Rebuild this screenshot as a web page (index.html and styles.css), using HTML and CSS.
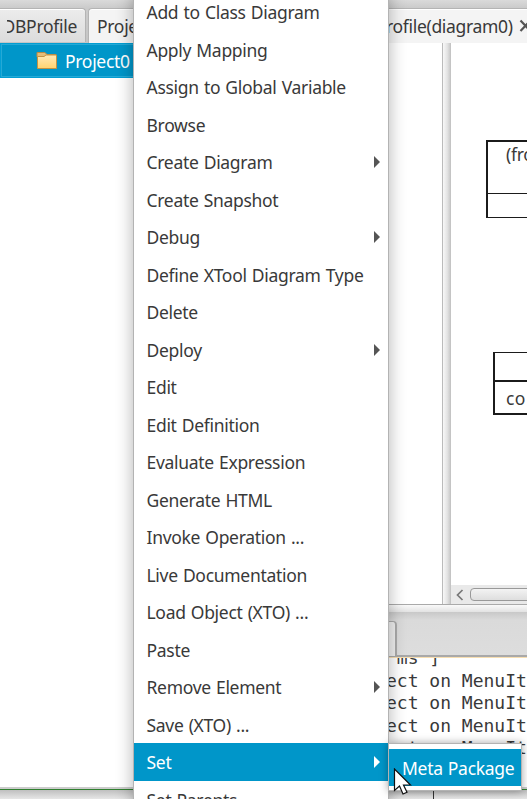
FILE: index.html
```html
<!DOCTYPE html>
<html lang="en">
<head>
<meta charset="utf-8">
<title>XModeler</title>
<link rel="stylesheet" href="styles.css">
</head>
<body>
<div class="app">
  <div class="tabs">
    <div class="tab tab-first"><div class="clip"><span>DBProfile</span></div></div>
    <div class="tab tab-active"><span class="tab-name">Project0</span><span class="tab-diagram">rofile(diagram0)</span>
      <svg class="close" width="14" height="14" viewBox="0 0 14 14"><path d="M1.500 1.500L11.500 12M11.500 1.500L1.500 12"/></svg>
    </div>
  </div>
  <div class="work">
    <div class="tree">
      <div class="tree-row">
        <svg width="22" height="19" viewBox="0 0 22 19"><defs><linearGradient id="f" x2="0" y2="1"><stop stop-color="#ffeab8"/><stop offset="1" stop-color="#ffd36f"/></linearGradient></defs><path d="M1 1.500H9L11 3.500H20V6H1Z" fill="#e5bd78" stroke="#b78b45"/><path d="M1.500 17.500V5.500H8L10 4H20.500V17.500Z" fill="url(#f)" stroke="#c39242"/></svg>
        <span>Project0</span>
      </div>
    </div>
    <div class="side">
      <div class="upper">
        <div class="divider"></div>
        <div class="canvas">
          <div class="sheet">
            <div class="cls cls-a"><div class="head">(from</div><div class="body"></div></div>
            <div class="cls cls-b"><div class="head"></div><div class="body">co</div></div>
          </div>
          <div class="scroll">
            <svg class="arrow" width="19" height="18" viewBox="0 0 19 18"><path d="M11.500 4L6.500 9L11.500 14"/></svg>
            <div class="thumb"></div>
          </div>
        </div>
      </div>
      <div class="hdivider"></div>
      <div class="ctabs"><div class="ctab"></div></div>
      <div class="console"><div>&nbsp;ms ]</div><div>ect on MenuIt</div><div>ect on MenuIt</div><div>ect on MenuIt</div><div>ect on MenuIt</div></div>
    </div>
  </div>
  <div class="footer"><div class="footer-edge"></div></div>
</div>

<div class="menu">
  <div class="item">Add to Class Diagram</div>
  <div class="item">Apply Mapping</div>
  <div class="item">Assign to Global Variable</div>
  <div class="item">Browse</div>
  <div class="item more">Create Diagram</div>
  <div class="item">Create Snapshot</div>
  <div class="item more">Debug</div>
  <div class="item">Define XTool Diagram Type</div>
  <div class="item">Delete</div>
  <div class="item more">Deploy</div>
  <div class="item">Edit</div>
  <div class="item">Edit Definition</div>
  <div class="item">Evaluate Expression</div>
  <div class="item">Generate HTML</div>
  <div class="item">Invoke Operation ...</div>
  <div class="item">Live Documentation</div>
  <div class="item">Load Object (XTO) ...</div>
  <div class="item">Paste</div>
  <div class="item more">Remove Element</div>
  <div class="item">Save (XTO) ...</div>
  <div class="item more selected">Set</div>
  <div class="item">Set Parents</div>
</div>
<div class="submenu"><div class="subitem">Meta Package</div></div>
<svg class="cursor" width="20" height="28" viewBox="0 0 20 28"><path d="M1.500 1V22.500L6.500 18L10 26L14 24.200L10.500 17H17.500Z" fill="#fff" stroke="#111" stroke-width="1.200"/></svg>
</body>
</html>
```

FILE: styles.css
```css
* { box-sizing: border-box; }
body {
  margin: 0;
  width: 527px;
  height: 799px;
  overflow: hidden;
  position: relative;
  background: #fff;
  color: #393939;
  font: 17.5px/24px "Noto Sans", "Open Sans", sans-serif;
  letter-spacing: -0.3px;
  word-spacing: 0.9px;
  white-space: nowrap;
}
.app { height: 799px; display: flex; flex-direction: column; overflow: hidden; }
.tabs {
  height: 43px;
  padding: 8px 0 0;
  display: flex;
  gap: 2px;
  background: linear-gradient(#dadada, #cbcbcb 8px, #c5c5c5);
}
.tab { height: 35px; border: 1px solid #b4b4b4; border-bottom: 0; box-shadow: inset 0 1px #fff; }
.tab-first {
  flex: none;
  width: 86px;
  height: 34px;
  padding: 5px 8px 0 7px;
  border-left: 0;
  border-radius: 0 4px 0 0;
  background: linear-gradient(#ececec, #dcdcdc);
}
.clip { display: flex; justify-content: flex-end; overflow: hidden; }
.tab-active {
  flex: 1;
  padding: 5px 0 0 8px;
  border-right: 0;
  border-radius: 4px 0 0 0;
  background: #f4f4f4;
  display: flex;
  align-items: flex-start;
  overflow: hidden;
}
.tab-name { flex: none; width: 289px; }
.tab-diagram { flex: none; width: 133px; letter-spacing: -0.32px; }
.close { flex: none; margin-top: 5px; stroke: #555; stroke-width: 2.2; }
.work { height: 744px; display: flex; }
.tree { width: 260px; }
.tree-row {
  height: 35px;
  padding-left: 35px;
  display: flex;
  align-items: center;
  gap: 7px;
  background: #0096c9;
  border: 1px solid #039ed3;
  box-shadow: inset 0 0 0 1px #25a9d6;
  color: #fff;
}
.side { flex: 1; display: flex; flex-direction: column; overflow: hidden; }
.upper { height: 561px; padding-left: 182px; display: flex; }
.divider {
  width: 9px;
  border-left: 1px solid #bbb;
  border-right: 1px solid #c4c4c4;
  background: linear-gradient(90deg, #f8f8f8, #e4e4e4 60%, #ccc);
}
.canvas { flex: 1; display: flex; flex-direction: column; overflow: hidden; }
.sheet { height: 542px; padding: 97px 0 0 35px; }
.cls { width: 100px; border: 2px solid #1b1b1b; }
.cls-a { height: 78px; border-width: 2px 1px 1px 2px; }
.cls-a .head { height: 51px; padding-left: 18px; line-height: 25px; }
.cls-a .body { border-top: 1px solid #1b1b1b; }
.cls-b { height: 63px; margin: 134px 0 0 7px; border-top-width: 1px; }
.cls-b .head { height: 27px; }
.cls-b .body { padding: 4px 0 0 11px; border-top: 2px solid #1b1b1b; letter-spacing: 0.3px; }
.scroll { height: 19px; display: flex; align-items: center; background: #e9e9e9; }
.arrow { flex: none; fill: none; stroke: #777; stroke-width: 1.7; }
.thumb {
  flex: none;
  width: 100px;
  height: 13px;
  border: 1px solid #999;
  border-radius: 4px;
  background: linear-gradient(#f3f3f3, #dedede);
}
.hdivider { height: 8px; border-top: 1px solid #aaa; background: linear-gradient(#fafafa, #e2e2e2); }
.ctabs {
  height: 45px;
  padding-top: 9px;
  border-bottom: 2px solid #a9a9a9;
  background: linear-gradient(#c8c8c8, #dadada 8px, #ddd);
}
.ctab {
  width: 137px;
  height: 36px;
  border: 1px solid #aaa;
  border-right-width: 2px;
  border-radius: 4px 4px 0 0;
  background: #f0f0f0;
}
.console {
  height: 130px;
  padding-left: 126px;
  overflow: hidden;
  border-top: 1px solid #f7deb1;
  font: 18px/22.5px "DejaVu Sans Mono", monospace;
  letter-spacing: 0;
  word-spacing: 0;
}
.console div:first-child { margin-top: -11px; }
.footer {
  flex: 1;
  padding-left: 433px;
  border-top: 2px solid #ccc;
  background: linear-gradient(#308030 1px, #bfbfbf 1px, #e6e6e6);
}
.footer-edge { height: 10px; border-left: 1px solid #333; }

.menu {
  position: absolute;
  left: 133px;
  top: -8px;
  width: 256px;
  height: 820px;
  padding-top: 1px;
  border: solid #b3b3b3;
  border-width: 0 1px 0 1px;
  background: #fff;
  box-shadow: 0 0 16px rgba(0, 0, 0, .3);
}
.item { height: 37.5px; padding: 7px 8px 0 12.5px; display: flex; justify-content: space-between; }
.more::after {
  content: "";
  margin-top: 6px;
  height: 0;
  border: solid transparent;
  border-width: 6px 0 6px 6px;
  border-left-color: #555;
}
.selected { background: #0096c9; color: #fff; }
.selected.more::after { border-left-color: #fff; }
.submenu {
  position: absolute;
  left: 388px;
  top: 743px;
  width: 134px;
  height: 48px;
  padding: 5px 0 4px;
  border: 1px solid #b3b3b3;
  background: #fff;
  box-shadow: 0 0 8px rgba(0, 0, 0, .35);
}
.subitem { height: 37px; padding: 7px 0 0 13px; background: #0096c9; color: #fff; }
.cursor { position: absolute; left: 393px; top: 768px; }
```
